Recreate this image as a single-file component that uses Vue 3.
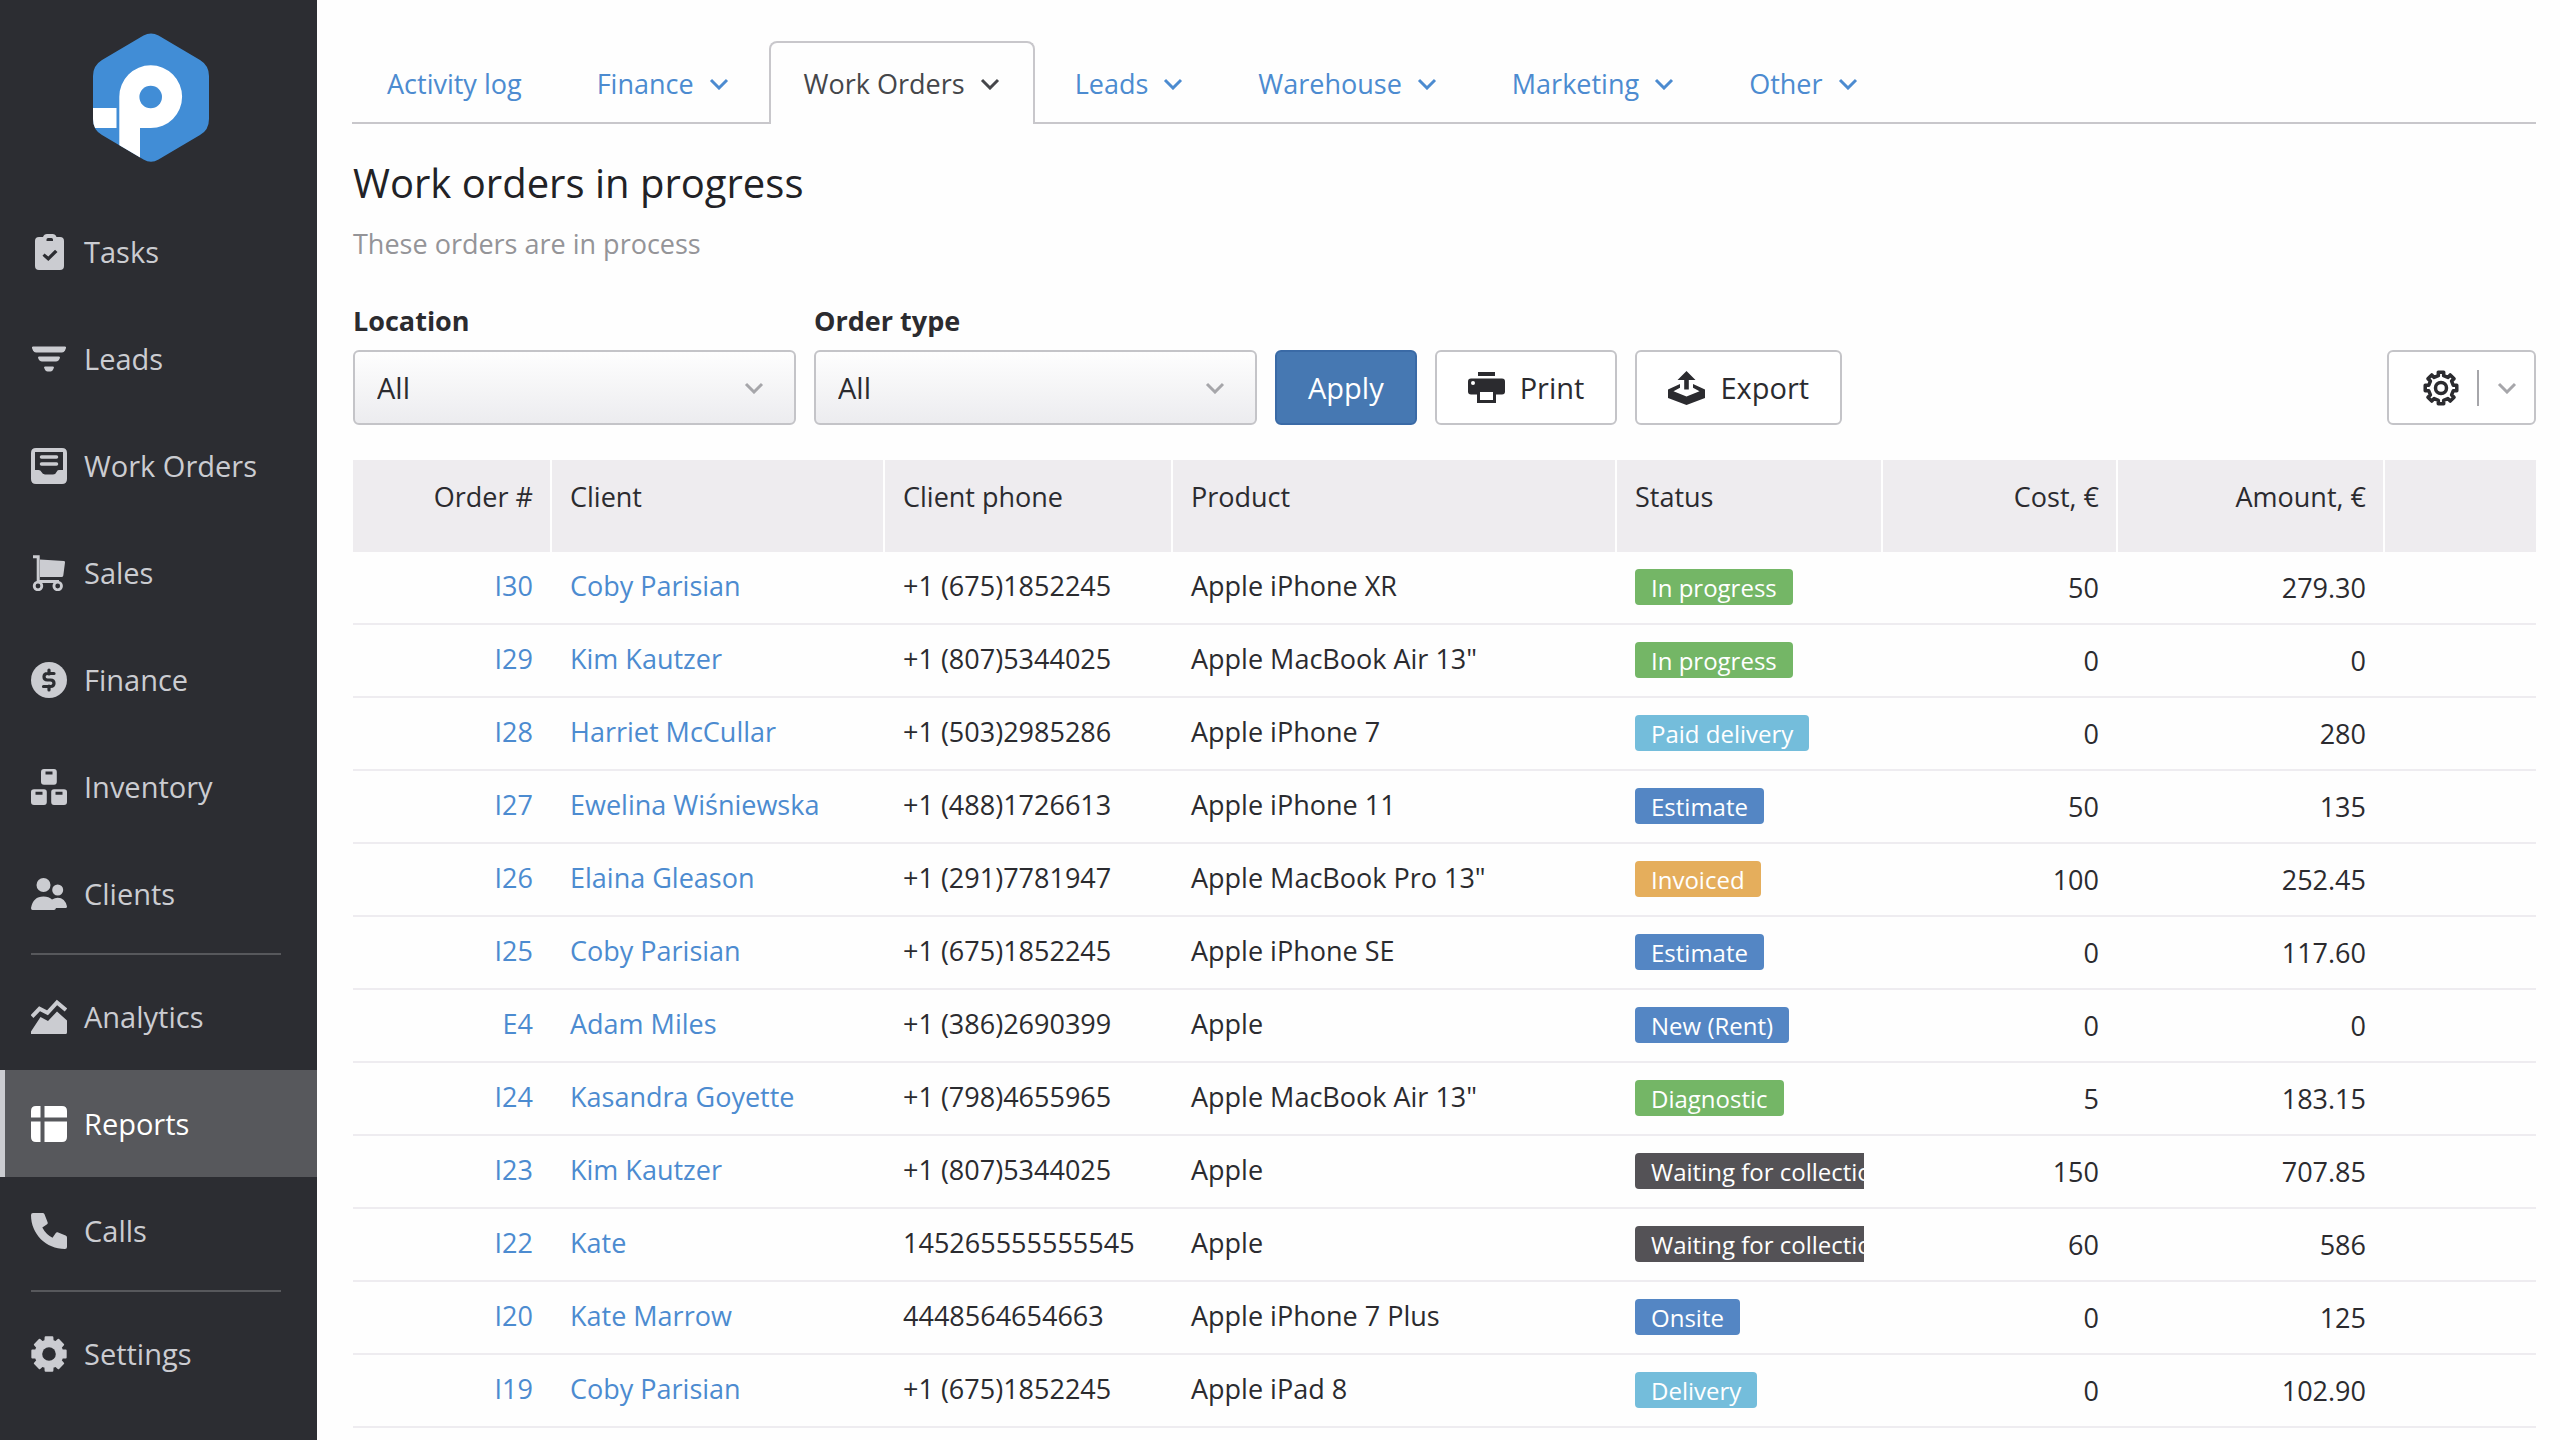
<script setup>
import { ref } from 'vue'

// Outline of a cog with eight teeth, centred on (18, 18)
function cog(outer, root, tip, base) {
  const points = []
  for (let i = 0; i < 8; i++) {
    const mid = (i * Math.PI) / 4 - Math.PI / 2
    const corners = [[root, -base], [outer, -tip], [outer, tip], [root, base]]
    for (const [r, offset] of corners) {
      points.push(`${(18 + r * Math.cos(mid + offset)).toFixed(2)} ${(18 + r * Math.sin(mid + offset)).toFixed(2)}`)
    }
  }
  return `M${points.join('L')}Z`
}

const solidCog = cog(17, 13.5, 0.2, 0.27)
const lineCog = cog(16, 12.6, 0.17, 0.21)

const menu = [
  [
    { name: 'Tasks', icon: 'tasks' },
    { name: 'Leads', icon: 'leads' },
    { name: 'Work Orders', icon: 'orders' },
    { name: 'Sales', icon: 'sales' },
    { name: 'Finance', icon: 'finance' },
    { name: 'Inventory', icon: 'inventory' },
    { name: 'Clients', icon: 'clients' },
  ],
  [
    { name: 'Analytics', icon: 'analytics' },
    { name: 'Reports', icon: 'reports', active: true },
    { name: 'Calls', icon: 'calls' },
  ],
  [{ name: 'Settings', icon: 'settings' }],
]

const tabs = [
  { name: 'Activity log' },
  { name: 'Finance', menu: true },
  { name: 'Work Orders', menu: true, active: true },
  { name: 'Leads', menu: true },
  { name: 'Warehouse', menu: true },
  { name: 'Marketing', menu: true },
  { name: 'Other', menu: true },
]

const location = ref('All')
const orderType = ref('All')

const orders = [
  { id: 'I30', client: 'Coby Parisian', phone: '+1 (675)1852245', product: 'Apple iPhone XR', status: 'In progress', tone: 'green', cost: '50', amount: '279.30' },
  { id: 'I29', client: 'Kim Kautzer', phone: '+1 (807)5344025', product: 'Apple MacBook Air 13"', status: 'In progress', tone: 'green', cost: '0', amount: '0' },
  { id: 'I28', client: 'Harriet McCullar', phone: '+1 (503)2985286', product: 'Apple iPhone 7', status: 'Paid delivery', tone: 'sky', cost: '0', amount: '280' },
  { id: 'I27', client: 'Ewelina Wiśniewska', phone: '+1 (488)1726613', product: 'Apple iPhone 11', status: 'Estimate', tone: 'blue', cost: '50', amount: '135' },
  { id: 'I26', client: 'Elaina Gleason', phone: '+1 (291)7781947', product: 'Apple MacBook Pro 13"', status: 'Invoiced', tone: 'orange', cost: '100', amount: '252.45' },
  { id: 'I25', client: 'Coby Parisian', phone: '+1 (675)1852245', product: 'Apple iPhone SE', status: 'Estimate', tone: 'blue', cost: '0', amount: '117.60' },
  { id: 'E4', client: 'Adam Miles', phone: '+1 (386)2690399', product: 'Apple', status: 'New (Rent)', tone: 'blue', cost: '0', amount: '0' },
  { id: 'I24', client: 'Kasandra Goyette', phone: '+1 (798)4655965', product: 'Apple MacBook Air 13"', status: 'Diagnostic', tone: 'green', cost: '5', amount: '183.15' },
  { id: 'I23', client: 'Kim Kautzer', phone: '+1 (807)5344025', product: 'Apple', status: 'Waiting for collection', tone: 'dark', cost: '150', amount: '707.85' },
  { id: 'I22', client: 'Kate', phone: '145265555555545', product: 'Apple', status: 'Waiting for collection', tone: 'dark', cost: '60', amount: '586' },
  { id: 'I20', client: 'Kate Marrow', phone: '4448564654663', product: 'Apple iPhone 7 Plus', status: 'Onsite', tone: 'blue', cost: '0', amount: '125' },
  { id: 'I19', client: 'Coby Parisian', phone: '+1 (675)1852245', product: 'Apple iPad 8', status: 'Delivery', tone: 'sky', cost: '0', amount: '102.90' },
]
</script>

<template>
  <div class="page">
    <aside class="sidebar">
      <a href="#" class="logo" aria-label="Home">
        <svg width="116" height="129" viewBox="0 0 116 129">
          <defs>
            <clipPath id="hexagon">
              <path d="M50.500 2.500Q58-1.700 65.500 2.500L107 27Q116 32.500 116 43V86Q116 97 107 102L65.500 126.500Q58 131 50.500 126.500L9 102Q0 97 0 86V43Q0 32.500 9 27Z" />
            </clipPath>
          </defs>
          <g clip-path="url(#hexagon)">
            <rect width="116" height="129" fill="#418dd6" />
            <rect y="75" width="23.500" height="20" fill="#fff" />
            <path d="M26.300 63.700a31.400 31.400 0 1 1 31.400 31.400H47V129H26.300z" fill="#fff" />
            <circle cx="57.700" cy="64" r="11.300" fill="#418dd6" />
          </g>
        </svg>
      </a>

      <nav>
        <ul v-for="(group, g) in menu" :key="g" class="group">
          <li v-for="item in group" :key="item.name">
            <a href="#" class="item" :class="{ active: item.active }">
              <svg class="icon" viewBox="0 0 36 36" fill="currentColor" aria-hidden="true">
                <path v-if="item.icon === 'tasks'" fill-rule="evenodd" d="M8 3H12Q13 0 16 0H21.500Q24.500 0 25.500 3H29Q33 3 33 7V32Q33 36 29 36H8Q4 36 4 32V7Q4 3 8 3ZM15.500 7H22V5.500Q22 4 20.500 4H17Q15.500 4 15.500 5.500ZM13.500 19.500L11.500 21.700L17.300 27L26.500 18L24 15.700L17.300 22.500Z" />
                <g v-else-if="item.icon === 'leads'">
                  <path d="M2 5.500H34Q35.500 5.500 35 7L34 9.500Q33 11.500 31 11.500H5Q3 11.500 2 9.500L1 7Q.5 5.500 2 5.500Z" />
                  <path d="M8 15.500H28Q29.500 15.500 28.800 17.200Q27.500 20.500 25 20.500H11Q8.500 20.500 7.200 17.200Q6.500 15.500 8 15.500Z" />
                  <path d="M14 25.500H22Q23.500 25.500 22.800 27Q21.500 30.500 19.500 30.500H16.500Q14.500 30.500 13.200 27Q12.500 25.500 14 25.500Z" />
                </g>
                <g v-else-if="item.icon === 'orders'">
                  <path fill-rule="evenodd" d="M5 0H31Q36 0 36 5V31Q36 36 31 36H5Q0 36 0 31V5Q0 0 5 0ZM4 4V22H7.500Q9.500 22 10.500 24T14 26.500H22Q24.500 26.500 25.500 24T28.500 22H32V4Z" />
                  <path d="M10.500 9H25.500M10.500 16H25.500" stroke="currentColor" stroke-width="3.500" stroke-linecap="round" />
                </g>
                <g v-else-if="item.icon === 'sales'">
                  <path d="M9 4.500L33 6Q34.300 6.200 34 7.500L32.300 20.500Q32 22 30.500 22H9Z" />
                  <path d="M2 1.800H7.200V26.500H28" fill="none" stroke="currentColor" stroke-width="3" />
                  <circle cx="7" cy="31" r="3.800" fill="#2c2d32" stroke="currentColor" stroke-width="2.800" />
                  <circle cx="26.700" cy="31" r="3.800" fill="#2c2d32" stroke="currentColor" stroke-width="2.800" />
                </g>
                <g v-else-if="item.icon === 'finance'">
                  <circle cx="18" cy="18" r="18" />
                  <path d="M23 11.500H16.500Q13 11.500 13 14.700T16.500 18H19.500Q23 18 23 21.200T19.500 24.500H12.500M18 8V12M18 24V28" fill="none" stroke="#2c2d32" stroke-width="3.200" stroke-linecap="round" />
                </g>
                <g v-else-if="item.icon === 'inventory'" fill-rule="evenodd">
                  <path d="M13 0H23Q25.800 0 25.800 3V12.800Q25.800 15.800 23 15.800H13Q10 15.800 10 12.800V3Q10 0 13 0ZM14.500 2.500V5.500H21.500V2.500Z" />
                  <path d="M3 20.200H13Q15.800 20.200 15.800 23V33Q15.800 36 13 36H3Q0 36 0 33V23Q0 20.200 3 20.200ZM4.500 22.700V25.700H11.500V22.700Z" />
                  <path d="M23 20.200H33Q36 20.200 36 23V33Q36 36 33 36H23Q20.200 36 20.200 33V23Q20.200 20.200 23 20.200ZM24.500 22.700V25.700H31.500V22.700Z" />
                </g>
                <g v-else-if="item.icon === 'clients'">
                  <circle cx="12.500" cy="9" r="7" />
                  <circle cx="26.700" cy="14" r="5.500" />
                  <path d="M0 32Q2 20.500 12.500 20.500Q18 20.500 21 23.500Q24 21.700 26.700 21.700Q34 21.700 36 30.500Q36 32 34.500 32H25Q24.500 34 23 34H1.500Q0 34 0 32Z" />
                </g>
                <g v-else-if="item.icon === 'analytics'">
                  <path d="M1 17.500L8.500 9.800L16.500 13.800L26 3.500L35 11" fill="none" stroke="currentColor" stroke-width="4" />
                  <path d="M0 35V32.500L9.500 18L17 22L26 12.500L36 21.500V33.500Q36 35 34.500 35Z" />
                </g>
                <path v-else-if="item.icon === 'reports'" d="M5 0H9.500V11.500H0V5Q0 0 5 0ZM13.500 0H31Q36 0 36 5V11.500H13.500ZM0 15.500H9.500V36H5Q0 36 0 31ZM13.500 15.500H36V31Q36 36 31 36H13.500Z" />
                <path v-else-if="item.icon === 'calls'" d="M2 0H11.500Q13 0 13.500 1.300L16.700 9.500Q17 10.600 16.100 11.200L11.300 14.500Q15 21.500 21.500 24.700L24.800 19.900Q25.500 19 26.600 19.300L34.600 22.500Q36 23.100 36 24.500V34Q36 36 34 36C15 36 0 21 0 2Q0 0 2 0Z" />
                <g v-else>
                  <path :d="solidCog" stroke="currentColor" stroke-width="2" stroke-linejoin="round" />
                  <circle cx="18" cy="18" r="6.800" fill="#2c2d32" />
                </g>
              </svg>
              <span>{{ item.name }}</span>
            </a>
          </li>
        </ul>
      </nav>
    </aside>

    <main class="main">
      <nav class="tabs" aria-label="Report groups">
        <a v-for="tab in tabs" :key="tab.name" href="#" class="tab" :class="{ active: tab.active }">
          {{ tab.name }}
          <svg v-if="tab.menu" class="chevron" viewBox="0 0 20 12" aria-hidden="true">
            <path d="M2 2L10 10L18 2" />
          </svg>
        </a>
      </nav>

      <h1>Work orders in progress</h1>
      <p class="subtitle">These orders are in process</p>

      <form class="filters" @submit.prevent>
        <div class="field">
          <label for="location">Location</label>
          <div class="select">
            <select id="location" v-model="location">
              <option>All</option>
            </select>
            <svg class="chevron" viewBox="0 0 20 12" aria-hidden="true">
              <path d="M2 2L10 10L18 2" />
            </svg>
          </div>
        </div>
        <div class="field">
          <label for="order-type">Order type</label>
          <div class="select">
            <select id="order-type" v-model="orderType">
              <option>All</option>
            </select>
            <svg class="chevron" viewBox="0 0 20 12" aria-hidden="true">
              <path d="M2 2L10 10L18 2" />
            </svg>
          </div>
        </div>
        <button type="submit" class="button primary">Apply</button>
        <button type="button" class="button">
          <svg width="37" height="34" viewBox="0 0 37 34" fill="currentColor" aria-hidden="true">
            <path d="M10 1H27V5H10Z" />
            <path d="M3 7.500H34Q37 7.500 37 10.500V20.500Q37 23.500 34 23.500H3Q0 23.500 0 20.500V10.500Q0 7.500 3 7.500Z" />
            <circle cx="5" cy="12" r="2" fill="#fff" />
            <path d="M10.500 19.500H26.500V30.500H10.500Z" fill="#fff" stroke="currentColor" stroke-width="3" />
          </svg>
          Print
        </button>
        <button type="button" class="button">
          <svg width="37" height="34" viewBox="0 0 37 34" fill="currentColor" aria-hidden="true">
            <path d="M18.500 0L27.500 9H20.800V18.500H16.200V9H9.500Z" />
            <path d="M0 18.500L12 13V16.800L5.500 20.200L18.500 25.500L31.500 20.200L25 16.800V13L37 18.500V27L18.500 34L0 27Z" />
          </svg>
          Export
        </button>
        <button type="button" class="button columns" aria-label="Table settings">
          <svg width="36" height="36" viewBox="0 0 36 36" fill="none" stroke="currentColor" stroke-width="3.500" stroke-linejoin="round" aria-hidden="true">
            <path :d="lineCog" />
            <circle cx="18" cy="18" r="5.500" />
          </svg>
          <span class="bar"></span>
          <svg class="chevron" viewBox="0 0 20 12" aria-hidden="true">
            <path d="M2 2L10 10L18 2" />
          </svg>
        </button>
      </form>

      <table class="orders">
        <colgroup>
          <col class="w-id" />
          <col class="w-client" />
          <col class="w-phone" />
          <col class="w-product" />
          <col class="w-status" />
          <col class="w-cost" />
          <col class="w-amount" />
          <col />
        </colgroup>
        <thead>
          <tr>
            <th class="right">Order #</th>
            <th>Client</th>
            <th>Client phone</th>
            <th>Product</th>
            <th>Status</th>
            <th class="right">Cost, €</th>
            <th class="right">Amount, €</th>
            <th></th>
          </tr>
        </thead>
        <tbody>
          <tr v-for="order in orders" :key="order.id">
            <td class="right"><a href="#">{{ order.id }}</a></td>
            <td><a href="#">{{ order.client }}</a></td>
            <td>{{ order.phone }}</td>
            <td>{{ order.product }}</td>
            <td class="low">
              <div class="clip"><span class="badge" :class="order.tone">{{ order.status }}</span></div>
            </td>
            <td class="right low">{{ order.cost }}</td>
            <td class="right low">{{ order.amount }}</td>
            <td></td>
          </tr>
        </tbody>
      </table>
    </main>
  </div>
</template>

<style>
body {
  background: #fefefe;
}
</style>

<style scoped>
.page {
  display: flex;
  min-height: 100vh;
  font-family: "Open Sans", "Noto Sans", sans-serif;
  font-size: 27px;
  line-height: 37px;
  color: #2b2b2f;
}

.page *,
.page {
  box-sizing: border-box;
}

a {
  color: #4c8bd0;
  text-decoration: none;
}

/* Sidebar */
.sidebar {
  flex: 0 0 317px;
  background: #2c2d32;
}

.logo {
  display: block;
  height: 198px;
  padding: 33px 0 0 93px;
}

.logo svg {
  display: block;
}

.group {
  margin: 0;
  padding: 0;
  list-style: none;
}

.group + .group::before {
  content: "";
  display: block;
  height: 2px;
  margin: 6px 36px 8px 31px;
  background: #57585c;
}

.item {
  display: flex;
  align-items: center;
  gap: 17px;
  height: 107px;
  padding-left: 31px;
  font-size: 29px;
  color: #cbccd1;
}

.item.active {
  padding-left: 26px;
  border-left: 5px solid #cbccd1;
  background: #57585c;
  color: #fff;
}

.icon {
  flex: none;
  width: 36px;
  height: 36px;
}

/* Report tabs */
.main {
  flex: 1;
  min-width: 0;
  padding: 41px 24px 0 36px;
}

.tabs {
  display: flex;
  gap: 5px;
  margin-left: -1px;
  box-shadow: inset 0 -2px #c8c7cb;
}

.tab {
  display: flex;
  align-items: center;
  gap: 15px;
  padding: 22px 33px;
  border: 2px solid transparent;
  border-bottom: 0;
  border-radius: 8px 8px 0 0;
  white-space: nowrap;
}

.tab.active {
  border-color: #c8c7cb;
  background: #fefefe;
  color: #45464a;
}

.chevron {
  flex: none;
  width: 20px;
  height: 12px;
  fill: none;
  stroke: currentColor;
  stroke-width: 3px;
}

h1 {
  margin: 31px 0 14px;
  font-size: 40px;
  font-weight: 400;
  line-height: 56px;
  color: #222226;
}

.subtitle {
  margin: 0 0 40px;
  color: #949498;
}

/* Filters */
.filters {
  display: flex;
  align-items: flex-end;
  gap: 18px;
  margin-bottom: 35px;
}

.field {
  width: 443px;
}

.field label {
  display: block;
  margin-bottom: 11px;
  font-weight: 700;
}

.select {
  position: relative;
}

.select select {
  display: block;
  width: 100%;
  height: 75px;
  padding: 0 22px;
  appearance: none;
  border: 2px solid #c4c4c8;
  border-radius: 6px;
  background: linear-gradient(#fefefe, #ececef);
  font: inherit;
  font-size: 29px;
  color: inherit;
}

.select .chevron {
  position: absolute;
  top: 32px;
  right: 32px;
  color: #a6a6aa;
  pointer-events: none;
}

.button {
  display: flex;
  align-items: center;
  gap: 15px;
  height: 75px;
  padding: 0 31px;
  border: 2px solid #c4c4c8;
  border-radius: 6px;
  background: #fff;
  font: inherit;
  font-size: 29px;
  color: #2b2b2f;
}

.button.primary {
  border-color: #3a6aa6;
  background: #4678b2;
  color: #fff;
}

.button.columns {
  gap: 18px;
  margin-left: auto;
  padding: 0 17px 0 34px;
}

.columns .chevron {
  color: #a6a6aa;
}

.bar {
  width: 2px;
  height: 36px;
  background: #a6a6aa;
}

/* Orders table */
.orders {
  width: 100%;
  table-layout: fixed;
  border-collapse: separate;
  border-spacing: 0;
}

.w-id { width: 199px; }
.w-client { width: 333px; }
.w-phone { width: 288px; }
.w-product { width: 444px; }
.w-status { width: 266px; }
.w-cost { width: 235px; }
.w-amount { width: 267px; }

th {
  height: 92px;
  padding: 18px 17px 0 18px;
  border-right: 2px solid #fefefe;
  background: #eeecef;
  font-weight: 400;
  text-align: left;
  vertical-align: top;
}

th:last-child {
  border-right: 0;
}

td {
  height: 73px;
  padding: 15px 19px 0 18px;
  border-bottom: 2px solid #eeecf0;
  vertical-align: top;
  white-space: nowrap;
}

td.low {
  padding-top: 17px;
}

.right {
  text-align: right;
}

.clip {
  overflow: hidden;
}

.badge {
  display: block;
  width: max-content;
  height: 36px;
  padding: 0 16px;
  border-radius: 4px;
  font-size: 24px;
  line-height: 38px;
  color: #fff;
}

.green { background: #74b666; }
.sky { background: #74bddb; }
.blue { background: #5486c4; }
.orange { background: #e5ae5c; }
.dark { background: #545256; }
</style>
